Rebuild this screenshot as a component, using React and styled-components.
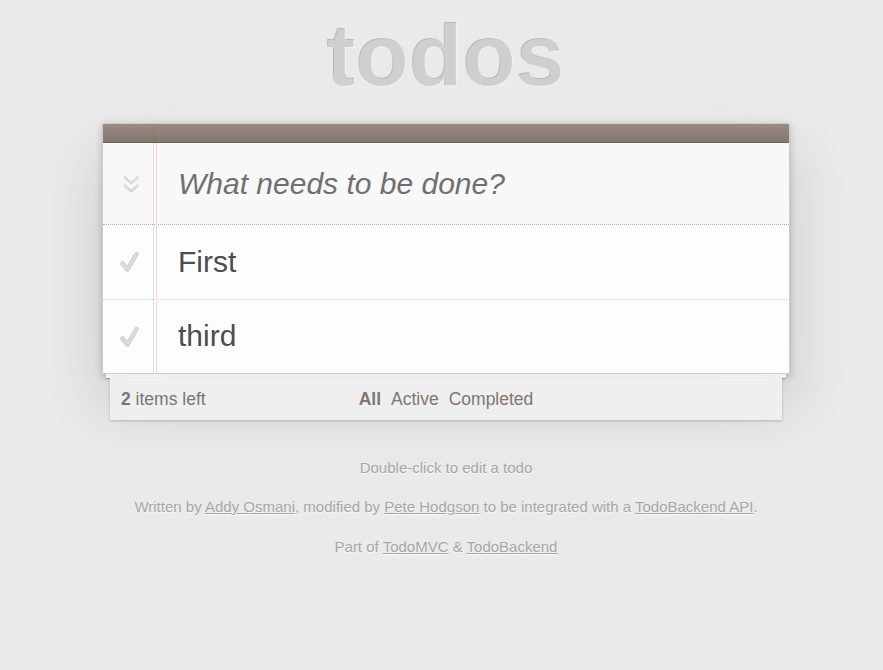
import styled, { createGlobalStyle } from "styled-components";

const GlobalStyle = createGlobalStyle`
  html, body {
    margin: 0;
    background: #eaeaea;
  }

  body {
    font: 17.5px "Liberation Sans", Arial, sans-serif;
    line-height: 24.5px;
    color: #4d4d4d;
  }
`;

const Page = styled.div`
  box-sizing: border-box;
  width: 688px;
  margin: 0 0 0 102px;
  padding-top: 13px;
`;

const Title = styled.h1`
  margin: 0 0 22.5px;
  font-size: 87.5px;
  line-height: 87.5px;
  font-weight: bold;
  text-align: center;
  color: rgba(255, 255, 255, 0.3);
  text-shadow: -1px -1px rgba(0, 0, 0, 0.2);
`;

const Card = styled.section`
  position: relative;
  background: rgba(255, 255, 255, 0.9);
  border: 1px solid #ccc;
  border-radius: 2px 2px 0 0;
  box-shadow: 0 2.5px 7.5px 0 rgba(0, 0, 0, 0.2),
    0 31px 62px 0 rgba(0, 0, 0, 0.15);

  /* the red "notebook" margin */
  &::before {
    content: "";
    position: absolute;
    top: 0;
    bottom: 0;
    left: 50px;
    width: 2px;
    border-left: 1px solid #f5d6d6;
    border-right: 1px solid #f5d6d6;
  }
`;

const TopBar = styled.div`
  position: relative;
  z-index: 1;
  height: 18px;
  border-bottom: 1px solid #6c615c;
  border-radius: 1px 1px 0 0;
  background: linear-gradient(
    rgba(132, 110, 100, 0.8),
    rgba(101, 84, 76, 0.8)
  );
`;

const NewRow = styled.div`
  display: flex;
  align-items: center;
  height: 81px;
  background: rgba(0, 0, 0, 0.02);
`;

const ToggleCell = styled.div`
  box-sizing: border-box;
  flex-shrink: 0;
  width: 50px;
  padding-left: 10px;
  display: flex;
  justify-content: center;
`;

const ToggleAll = styled.span`
  display: inline-block;
  font-size: 36px;
  line-height: 36px;
  color: #dadada;
  transform: rotate(90deg);
`;

const NewInput = styled.input`
  flex: 1;
  min-width: 0;
  border: 0;
  outline: none;
  background: transparent;
  padding: 0 16px 0 25px;
  font-family: inherit;
  font-size: 30px;
  line-height: 42px;
  color: #4d4d4d;

  &::placeholder {
    font-style: italic;
    color: #707070;
  }
`;

const List = styled.ul`
  margin: 0;
  padding: 0;
  list-style: none;
  border-top: 1px dotted #adadad;
`;

const Item = styled.li`
  display: flex;
  align-items: center;
  font-size: 30px;
  border-bottom: 1px dotted #ccc;

  &:last-child {
    border-bottom: none;
  }
`;

const CheckCell = styled.span`
  flex-shrink: 0;
  width: 50px;
  display: flex;
  justify-content: center;

  svg {
    display: block;
    margin-left: 2px;
  }
`;

const Label = styled.label`
  display: block;
  margin-left: 6.25px;
  padding: 18.75px 75px 18.75px 18.75px;
  line-height: 36px;
  white-space: pre;
`;

const Strip = styled.div`
  position: relative;
  height: 4px;
  margin: 0 4px;
  background: rgba(255, 255, 255, 0.8);
  box-shadow: 0 1px 1px rgba(0, 0, 0, 0.3);
`;

const Footer = styled.footer`
  position: relative;
  display: grid;
  grid-template-columns: 1fr auto 1fr;
  align-items: center;
  height: 42px;
  margin: 0 8px;
  padding: 0 11px;
  background: #efefef;
  box-shadow: 0 1px 2.5px rgba(0, 0, 0, 0.2);
  color: #777;
`;

const Count = styled.span`
  text-align: left;

  strong {
    font-weight: bold;
  }
`;

const Filters = styled.ul`
  margin: 0;
  padding: 0;
  list-style: none;
  display: flex;
  gap: 5px;
`;

const Filter = styled.a`
  margin: 0 2.5px;
  color: #83756f;
  text-decoration: none;
  font-weight: ${(p) => (p.$selected ? "bold" : "normal")};
`;

const Info = styled.footer`
  margin-top: 35.5px;
  color: #a6a6a6;
  font-size: 15px;
  text-align: center;
  text-shadow: 0 1.25px 0 rgba(255, 255, 255, 0.7);

  p {
    margin: 15px 0;
  }

  a {
    color: inherit;
  }
`;

const CheckIcon = () => (
  <svg width="20" height="21" viewBox="0 0 20 21">
    <path
      d="M3.5 12.5 L8.5 18.5 L17.5 3"
      fill="none"
      stroke="#c4c4c4"
      strokeWidth="4.4"
      strokeLinecap="round"
      strokeLinejoin="round"
    />
    <path
      d="M3.5 12.5 L8.5 18.5 L17.5 3"
      fill="none"
      stroke="#dadada"
      strokeWidth="3.4"
      strokeLinecap="round"
      strokeLinejoin="round"
    />
  </svg>
);

const todos = ["First", "third"];
const filters = [
  { label: "All", selected: true },
  { label: "Active" },
  { label: "Completed" },
];

const App = () => (
  <>
    <GlobalStyle />
    <Page>
      <Title>todos</Title>
      <Card>
        <TopBar />
        <NewRow>
          <ToggleCell>
            <ToggleAll>»</ToggleAll>
          </ToggleCell>
          <NewInput placeholder="What needs to be done?" />
        </NewRow>
        <List>
          {todos.map((t) => (
            <Item key={t}>
              <CheckCell>
                <CheckIcon />
              </CheckCell>
              <Label>{t}</Label>
            </Item>
          ))}
        </List>
      </Card>
      <Strip />
      <Footer>
        <Count>
          <strong>2</strong> items left
        </Count>
        <Filters>
          {filters.map((f) => (
            <li key={f.label}>
              <Filter href="#/" $selected={f.selected}>
                {f.label}
              </Filter>
            </li>
          ))}
        </Filters>
        <span />
      </Footer>
      <Info>
        <p>Double-click to edit a todo</p>
        <p>
          Written by <a href="#/">Addy Osmani</a>, modified by{" "}
          <a href="#/">Pete Hodgson</a> to be integrated with a{" "}
          <a href="#/">TodoBackend API</a>.
        </p>
        <p>
          Part of <a href="#/">TodoMVC</a> &amp; <a href="#/">TodoBackend</a>
        </p>
      </Info>
    </Page>
  </>
);

export default App;
